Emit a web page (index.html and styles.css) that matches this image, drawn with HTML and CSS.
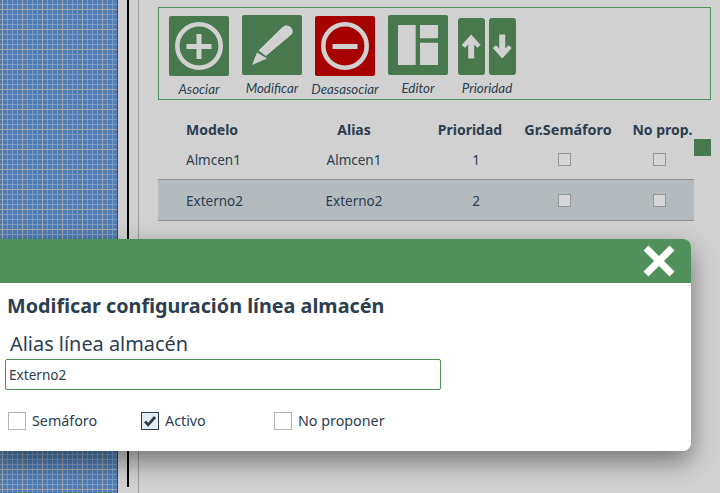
FILE: index.html
```html
<!DOCTYPE html>
<html>
<head>
    <meta charset="UTF-8"/>
    <meta name="viewport" content="width=device-width, initial-scale=1.0" />
    <title>Líneas almacén</title>
    <link rel="stylesheet" href="styles.css">
</head>
<body>
<div class="page">
    <div class="side_grid"></div>
    <div class="strip"><div class="black_line"></div></div>
    <div class="main">
        <div class="toolbar">
            <div class="tool">
                <div class="btn_icon">
                    <svg width="60" height="60" viewBox="0 0 60 60"><circle cx="30" cy="30" r="21.700" fill="none" stroke="#d1d1d1" stroke-width="4.600"/><path d="M30 18v25M17.500 30.500h25" stroke="#d1d1d1" stroke-width="5" fill="none"/></svg>
                </div>
                <span>Asociar</span>
            </div>
            <div class="tool tool_up">
                <div class="btn_icon">
                    <svg width="60" height="60" viewBox="0 0 60 60"><path d="M40 12.500C43 9.500 47 10 49 12.500C51 14.500 51.500 17.500 49.500 19.500L24 41L16.500 35.500zM15 37.500L25 43.500L10 50z" fill="#d1d1d1"/></svg>
                </div>
                <span>Modificar</span>
            </div>
            <div class="tool">
                <div class="btn_icon btn_red">
                    <svg width="60" height="60" viewBox="0 0 60 60"><circle cx="30" cy="30" r="21.700" fill="none" stroke="#d1d1d1" stroke-width="4.600"/><path d="M17.500 30.500h25" stroke="#d1d1d1" stroke-width="5" fill="none"/></svg>
                </div>
                <span>Deasasociar</span>
            </div>
            <div class="tool tool_up">
                <div class="btn_icon">
                    <svg width="60" height="60" viewBox="0 0 60 60"><path d="M10 10h17.700v40H10zM32 10h18v13.300H32zM32 27.700h18V50H32z" fill="#d1d1d1"/></svg>
                </div>
                <span>Editor</span>
            </div>
            <div class="tool tool_up tool_arrows">
                <div class="arrows">
                    <div class="btn_arrow">
                        <svg width="27" height="57" viewBox="0 0 27 57"><path d="M13.200 16.500L22.700 27L19.500 29.800L16.200 26.500V40.500H10.200V26.500L7 29.800L3.700 27z" fill="#d1d1d1"/></svg>
                    </div>
                    <div class="btn_arrow">
                        <svg width="27" height="57" viewBox="0 0 27 57"><path d="M13.200 40.500L3.700 30L7 27.200L10.200 30.500V16.500H16.200V30.500L19.500 27.200L22.700 30z" fill="#d1d1d1"/></svg>
                    </div>
                </div>
                <span>Prioridad</span>
            </div>
        </div>

        <div class="table_row">
            <table class="lines">
                <colgroup>
                    <col class="c_model"><col class="c_alias"><col class="c_prio"><col class="c_sem"><col class="c_noprop">
                </colgroup>
                <tr>
                    <th class="left">Modelo</th><th>Alias</th><th>Prioridad</th><th class="sem">Gr.Semáforo</th><th class="noprop">No prop.</th>
                </tr>
                <tr class="first">
                    <td class="left">Almcen1</td><td>Almcen1</td><td class="prio">1</td>
                    <td class="sem"><span class="mini_check"></span></td><td class="noprop"><span class="mini_check"></span></td>
                </tr>
                <tr class="selected">
                    <td class="left">Externo2</td><td>Externo2</td><td class="prio">2</td>
                    <td class="sem"><span class="mini_check"></span></td><td class="noprop"><span class="mini_check"></span></td>
                </tr>
            </table>
            <div class="green_square"></div>
        </div>
    </div>
</div>

<div class="modal">
    <div class="modal_head">
        <svg width="34" height="34" viewBox="0 0 34 34"><path d="M4 4l26 26M30 4L4 30" stroke="#fff" stroke-width="7" fill="none"/></svg>
    </div>
    <div class="modal_body">
        <h2>Modificar configuración línea almacén</h2>
        <label class="alias_label">Alias línea almacén</label>
        <input class="alias_input" type="text" value="Externo2">
        <div class="checks">
            <div class="check check_sem"><span class="box"></span>Semáforo</div>
            <div class="check check_act">
                <span class="box box_on">
                    <svg width="14" height="12" viewBox="0 0 14 12"><path d="M2 6.500l3.200 3.300L12 2" stroke="#2c3e50" stroke-width="2.800" fill="none"/></svg>
                </span>Activo
            </div>
            <div class="check"><span class="box"></span>No proponer</div>
        </div>
    </div>
</div>
</body>
</html>
```

FILE: styles.css
```css
html, body {
    margin: 0;
    height: 100%;
    overflow: hidden;
}

body {
    font-family: "Noto Sans", "Open Sans", sans-serif;
    font-size: 14px;
    color: #2c3e50;
    background-color: #d1d1d1;
}

.page {
    display: flex;
    height: 493px;
}

.side_grid {
    width: 117px;
    border-right: 1px solid #3b4a5c;
    background-color: #4f7db3;
    background-image:
        linear-gradient(to right, #a8a7a6 1px, transparent 1px),
        linear-gradient(to bottom, #a8a7a6 1px, transparent 1px),
        linear-gradient(to right, #7c9dc8 1px, transparent 1px),
        linear-gradient(to bottom, #7c9dc8 1px, transparent 1px);
    background-size: 20px 20px, 20px 20px, 5px 5px, 5px 5px;
    background-position: 2px 0, 0 9px, 2px 0, 0 4px;
}

.strip {
    width: 20px;
    border-right: 1px solid #9b9b9b;
}

.black_line {
    width: 2px;
    height: 487px;
    margin-left: 9px;
    background-color: #000;
}

.main {
    flex: 1;
    padding: 7px 9px 0 19px;
}

.toolbar {
    display: flex;
    height: 91px;
    padding-left: 10px;
    gap: 13px;
    border: 1px solid #4f8f58;
}

.tool {
    display: flex;
    flex-direction: column;
    align-items: center;
    padding-top: 8px;
    width: 60px;
}

.tool_up {
    padding-top: 7px;
}

.tool_arrows {
    width: 58px;
    margin-left: -3px;
}

.tool span {
    margin-top: 5px;
    font-family: "Lato", sans-serif;
    font-style: italic;
    font-size: 13.300px;
    white-space: nowrap;
}

.btn_icon {
    width: 60px;
    height: 60px;
    border-radius: 2px;
    background-color: #47784e;
}

.btn_red {
    background-color: #a60000;
}

.arrows {
    display: flex;
    gap: 4px;
    margin-top: 3px;
}

.btn_arrow {
    width: 27px;
    height: 57px;
    border-radius: 3px;
    background-color: #47784e;
}

.table_row {
    display: flex;
    margin-top: 14px;
}

.lines {
    width: 536px;
    table-layout: fixed;
    border-collapse: collapse;
}

.c_model { width: 128px; }
.c_alias { width: 136px; }
.c_prio { width: 96px; }
.c_sem { width: 100px; }
.c_noprop { width: 76px; }

.lines th {
    height: 30px;
    padding: 0;
    font-size: 14px;
    text-align: center;
    white-space: nowrap;
}

.lines td {
    padding: 0;
    font-size: 13.500px;
    text-align: center;
}

.lines .left {
    padding-left: 28px;
    text-align: left;
}

.lines td.prio {
    padding-left: 12px;
}

.lines th.sem {
    font-size: 14.400px;
}

.lines td.sem {
    padding-right: 7px;
}

.lines th.noprop {
    padding-left: 13px;
}

.lines td.noprop {
    padding-left: 7px;
}

.first td {
    height: 31px;
    padding-bottom: 4px;
}

.selected td {
    height: 39px;
    padding-top: 1px;
    background-color: #b4bbbe;
    border-top: 1px solid #919191;
    border-bottom: 1px solid #919191;
}

.mini_check {
    display: block;
    width: 11px;
    height: 11px;
    margin: 0 auto;
    border: 1px solid #959595;
    background-color: #d6d6d6;
}

.green_square {
    width: 17px;
    height: 17px;
    margin-top: 25px;
    background-color: #47784e;
}

.modal {
    position: absolute;
    left: -10px;
    top: 239px;
    width: 701px;
    height: 212px;
    border-radius: 8px;
    background-color: #fff;
    box-shadow: 0 10px 26px rgba(0, 0, 0, 0.45);
    overflow: hidden;
}

.modal_head {
    display: flex;
    justify-content: flex-end;
    align-items: center;
    height: 44px;
    padding-right: 15px;
    background-color: #50905a;
}

.modal_body {
    padding: 10px 0 0 15px;
}

.modal_body h2 {
    margin: 0 0 0 2px;
    font-size: 19.800px;
    font-weight: 700;
    line-height: 26px;
}

.alias_label {
    display: block;
    margin: 12px 0 0 5px;
    font-size: 19.900px;
    line-height: 26px;
}

.alias_input {
    display: block;
    box-sizing: border-box;
    width: 436px;
    height: 31px;
    margin-top: 2px;
    padding: 0 3px;
    font-family: inherit;
    font-size: 13.600px;
    color: #2c3e50;
    border: 1px solid #4f8f58;
    border-radius: 2px;
    outline: none;
}

.checks {
    display: flex;
    margin-top: 21px;
    margin-left: 3px;
    font-size: 14.300px;
}

.check {
    display: flex;
    align-items: center;
    gap: 6px;
}

.check_sem { width: 133px; }
.check_act { width: 133px; }

.box {
    display: flex;
    align-items: center;
    justify-content: center;
    box-sizing: border-box;
    width: 18px;
    height: 18px;
    border: 1px solid #b5b5b5;
}

.box_on {
    border-color: #2c3e50;
    background-color: #e3edf3;
}
```
